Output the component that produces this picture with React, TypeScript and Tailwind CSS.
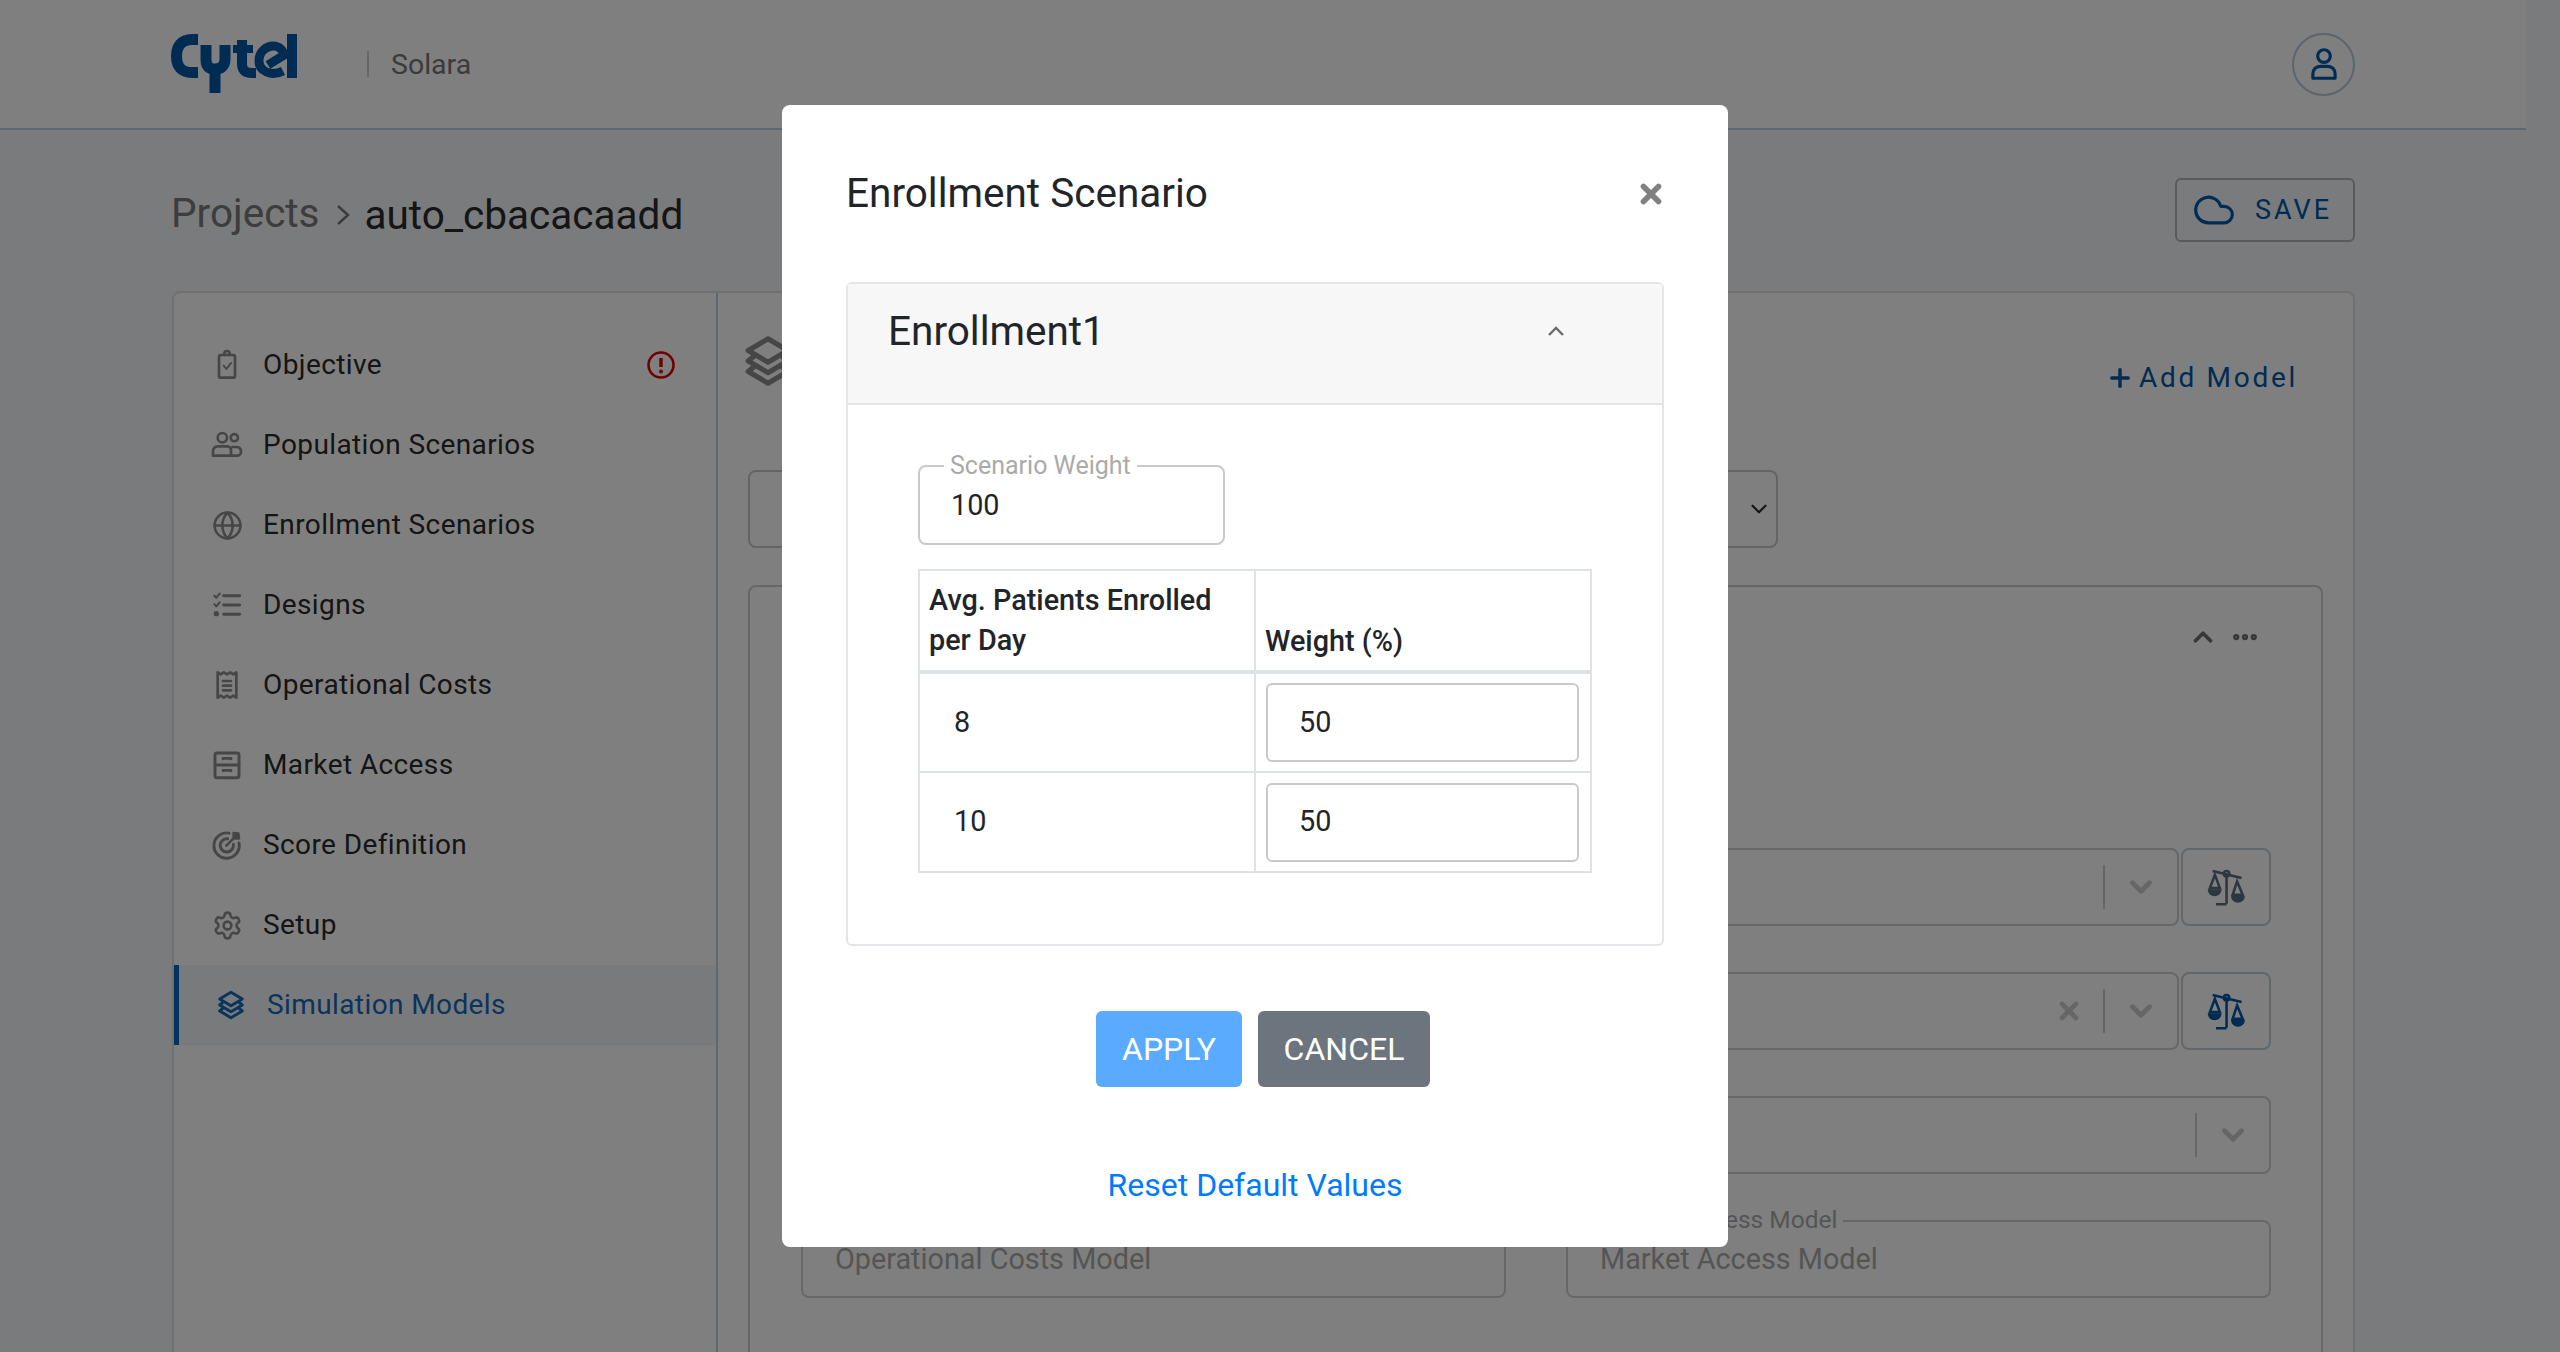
import React from "react";
import { ChevronDown, ChevronUp, Plus, X, MoreHorizontal, Globe, Settings, Cloud } from "lucide-react";

const Ic = ({ children, className = "", size = 32, vb = 24 }: { children: React.ReactNode; className?: string; size?: number; vb?: number }) => (
  <svg width={size} height={size} viewBox={`0 0 ${vb} ${vb}`} fill="none" stroke="currentColor" strokeWidth={2} strokeLinecap="round" strokeLinejoin="round" className={className}>
    {children}
  </svg>
);

const Logo = () => (
  <svg width="128" height="60" viewBox="0 0 128 60" fill="none" stroke="#0058a8" strokeWidth={10}>
    <path d="M27 5.500 H21 C10 5.500 5.500 13 5.500 22 C5.500 32 10 38.500 21 38.500 H27" strokeWidth={11} />
    <path d="M35 11 V25 C35 32 38 35 44 35 C50 35 54 32 54 25 V11" strokeWidth={11} />
    <path d="M44 32 V59" strokeWidth={11} />
    <path d="M71 6 V29 C71 36 74 39 81 39 H85" strokeWidth={10} />
    <path d="M62 15 H82" strokeWidth={8} />
    <path d="M112 37 C100 43 88 37 88 27 C88 17 96 12 102 12 C108 12 112 16 113 21 L97 31" strokeWidth={9} />
    <path d="M121 0 V44" />
  </svg>
);

const Scale = () => (
  <svg width="40" height="40" viewBox="0 0 36 36" fill="currentColor" stroke="currentColor" strokeWidth={2.300}>
    <circle cx="18.500" cy="6" r="2.400" fill="none" />
    <path d="M6 3.500 L32 10" fill="none" />
    <path d="M18.500 8.500 V33 M9 33.500 H18.500" fill="none" />
    <path d="M8 7 L3.500 19 H12.500 Z" fill="none" />
    <path d="M1.500 20 H14 A6.250 6.250 0 0 1 1.500 20 Z" stroke="none" />
    <path d="M28 13 L24 25 H33 Z" fill="none" />
    <path d="M22.500 26 H35 A6.250 6.250 0 0 1 22.500 26 Z" stroke="none" />
  </svg>
);

const nav: [string, React.ReactNode][] = [
  ["Objective", <Ic><rect x="6" y="4.500" width="12" height="17" rx="1.500" /><path d="M10 4.500 V3.500 A2 2 0 0 1 14 3.500 V4.500" /><path d="M9.500 12.500 L11.500 15 L15 10.500" strokeWidth={1.500} /></Ic>],
  ["Population Scenarios", <Ic><circle cx="8.500" cy="6.500" r="3.500" /><circle cx="17.500" cy="6.500" r="2.700" /><path d="M1.500 20 V16.500 A3.500 3.500 0 0 1 5 13 H12 A3.500 3.500 0 0 1 15 15 V20 Z" /><path d="M16 13.500 H19.500 A3.200 3.200 0 0 1 22.500 16.500 V17 A3 3 0 0 1 19.500 20 H16" /></Ic>],
  ["Enrollment Scenarios", <Globe size={31} strokeWidth={2} />],
  ["Designs", <Ic><path d="M2.500 5 L4 6.500 L6.500 3.500 M2.500 11.500 L4 13 L6.500 10" strokeWidth={1.600} /><path d="M9.500 5 H21.500 M9.500 12 H21.500 M9.500 19 H21.500" strokeWidth={2.200} /><circle cx="4" cy="18.500" r="1" /></Ic>],
  ["Operational Costs", <Ic><path d="M5 2.500 L7.300 4 L9.600 2.500 L12 4 L14.400 2.500 L16.700 4 L19 2.500 V21.500 L16.700 20 L14.400 21.500 L12 20 L9.600 21.500 L7.300 20 L5 21.500 Z" /><path d="M9 9 H15 M9 12.500 H15 M9 16 H15" /></Ic>],
  ["Market Access", <Ic><rect x="3" y="3" width="18" height="18.500" rx="1.500" strokeWidth={2.200} /><path d="M3 12 H21" strokeWidth={2.200} /><path d="M9 7.500 V7 H15 V7.500 M9 16.500 V16 H15 V16.500" /></Ic>],
  ["Score Definition", <Ic><path d="M13.500 3.100 A9.500 9.500 0 1 0 21 10.500" strokeWidth={2.200} /><path d="M12.500 7.300 A5 5 0 1 0 16.800 11.500" strokeWidth={2.200} /><path d="M11.500 12.500 L19 5" /><path d="M17 3 L20.500 3.500 L21 7 L18 7 L17 6 Z" fill="currentColor" /></Ic>],
  ["Setup", <Settings size={31} strokeWidth={2} />],
];

const Stack = ({ size = 32, className = "", sw = 2.2 }: { size?: number; className?: string; sw?: number }) => (
  <Ic size={size} className={className}>
    <path d="M12 2.500 L20.500 7.500 L12 12.500 L3.500 7.500 Z" strokeWidth={sw} />
    <path d="M6 10 L3.500 12 L12 17 L20.500 12 L18 10" strokeWidth={sw} />
    <path d="M6 14.500 L3.500 16.500 L12 21.500 L20.500 16.500 L18 14.500" strokeWidth={sw} />
  </Ic>
);

const SelectBox = ({ className = "", clear = false }: { className?: string; clear?: boolean }) => (
  <div className={`h-[78px] rounded-[8px] border-2 border-[#cfcfcf] flex items-center justify-end ${className}`}>
    {clear && <X size={28} strokeWidth={4} className="text-[#cccccc] mr-[20px]" />}
    <div className="w-[2px] h-[44px] bg-[#cccccc]" />
    <ChevronDown size={34} strokeWidth={3.400} className="text-[#cccccc] mx-[19px]" />
  </div>
);

const ScaleBtn = ({ className = "" }: { className?: string }) => (
  <div className={`w-[90px] h-[78px] rounded-[8px] border-2 border-[#c4ced8] flex items-center justify-center ${className}`}>
    <Scale />
  </div>
);

const Field = ({ label, text, className = "" }: { label?: string; text: string; className?: string }) => (
  <div className={`relative h-[78px] rounded-[8px] border-2 border-[#cfcfcf] flex items-center pl-[32px] pt-[2px] ${className}`}>
    {label && <span className="absolute left-[27px] -top-[17px] bg-white px-[6px] text-[24.500px] leading-[30px] text-[#aaaaaa]">{label}</span>}
    <span className="text-[28.800px] text-[#aaaaaa]">{text}</span>
  </div>
);

const ModalInput = ({ value }: { value: string }) => (
  <div className="h-[79px] rounded-[6px] border-2 border-[#c9c9c9] flex items-center pl-[31px] text-[28.800px] text-[#212529]">{value}</div>
);

export default function App() {
  return (
    <div className="relative h-[1352px] w-[2560px] overflow-hidden bg-[#f4f6f8] font-['Roboto',sans-serif]">
      <div className="w-[2526px]">
        <header className="h-[130px] bg-white border-b-2 border-[#bcd0e4] pl-[171px] pr-[171px] flex items-center">
          <div><Logo /></div>
          <div className="w-[2px] h-[26px] bg-[#cfcfcf] ml-[68px]" />
          <span className="ml-[22px] mt-[2px] text-[28.500px] text-[#777777]">Solara</span>
          <div className="ml-auto w-[63px] h-[63px] rounded-full border-2 border-[#b8c8d8] flex items-center justify-center text-[#0058a8]">
            <Ic size={38}><circle cx="12" cy="7" r="4" /><path d="M5 21 V18 A4.500 4.500 0 0 1 9.500 13.500 H14.500 A4.500 4.500 0 0 1 19 18 V21 Z" /></Ic>
          </div>
        </header>

        <div className="pl-[172px] pr-[171px]">
          <div className="h-[161px] flex items-start">
            <div className="flex items-center mt-[55px] h-[56px] -ml-[1px]">
              <span className="text-[40.500px] text-[#7a7a7a]">Projects</span>
              <svg width="14" height="24" viewBox="0 0 14 24" fill="none" stroke="#777777" strokeWidth={2.400} className="ml-[16px] mt-[4px]"><path d="M2 3 L12 12 L2 21" /></svg>
              <span className="ml-[15px] mt-[5px] text-[40.500px] text-[#2a2a2a]">auto_cbacacaadd</span>
            </div>
            <div className="ml-auto mt-[48px] w-[180px] h-[64px] rounded-[6px] border-2 border-[#b4b4b4] flex items-center pl-[15px] text-[#0058a8]">
              <Cloud size={44} strokeWidth={1.700} />
              <span className="ml-[19px] text-[27px] tracking-[3px]">SAVE</span>
            </div>
          </div>

          <div className="h-[1100px] bg-white rounded-t-[8px] border-2 border-[#e0e0e0] flex">
            <aside className="w-[544px] shrink-0 border-r-2 border-[#bcd0e4] pt-[32px]">
              {nav.map(([label, icon]) => (
                <div key={label} className="h-[80px] flex items-center pl-[37px] pr-[40px] text-[#2a2a2a]">
                  <span className="w-[32px] flex justify-center text-[#8c8c8c]">{icon}</span>
                  <span className="ml-[20px] text-[28px] tracking-[0.400px]">{label}</span>
                  {label === "Objective" && (
                    <svg width="30" height="30" viewBox="0 0 30 30" className="ml-auto text-[#e00000]" fill="none" stroke="currentColor" strokeWidth={2.600}>
                      <circle cx="15" cy="15" r="12.500" />
                      <path d="M15 8 V17" strokeWidth={3.400} />
                      <circle cx="15" cy="21.500" r="1.900" fill="currentColor" stroke="none" />
                    </svg>
                  )}
                </div>
              ))}
              <div className="h-[80px] flex items-center border-l-[5px] border-[#0a66c2] bg-[#f2f4f6] pl-[36px] text-[#1668b8]">
                <Stack size={32} />
                <span className="ml-[20px] text-[28px] tracking-[0.400px]">Simulation Models</span>
              </div>
            </aside>

            <main className="flex-1 pl-[30px] pr-[30px] pt-[43px]">
              <div className="h-[70px] flex items-start">
                <Stack size={56} sw={2.200} className="text-[#8c8c8c] -ml-[8px] -mt-[3px]" />
                <div className="ml-auto mr-[25px] mt-[21px] flex items-center text-[#0058a8]">
                  <Plus size={28} strokeWidth={3} />
                  <span className="ml-[5px] text-[28px] tracking-[2.700px]">Add Model</span>
                </div>
              </div>
              <div className="mt-[64px] w-[1030px] h-[78px] rounded-[8px] border-2 border-[#c8c8c8] flex items-center justify-end pr-[4px]">
                <ChevronDown size={26} strokeWidth={2} className="text-[#2a2a2a]" />
              </div>
              <div className="mt-[37px] h-[800px] rounded-[8px] border-2 border-[#cfcfcf] pt-[35px] pl-[51px] pr-[49px]">
                <div className="h-[226px] flex items-start justify-end pr-[12px] text-[#6e6e6e]">
                  <ChevronUp size={30} strokeWidth={3} />
                  <MoreHorizontal size={30} strokeWidth={3} className="ml-[12px]" />
                </div>
                <div className="grid grid-cols-[705px_705px] gap-x-[60px] gap-y-[46px]">
                  <div />
                  <div className="flex gap-[2px] text-[#5c6e80]"><SelectBox className="flex-1" /><ScaleBtn /></div>
                  <div />
                  <div className="flex gap-[2px] text-[#0058a8]"><SelectBox className="flex-1" clear /><ScaleBtn /></div>
                  <div />
                  <SelectBox />
                  <Field label="Operational Costs Model" text="Operational Costs Model" />
                  <Field label="Market Access Model" text="Market Access Model" />
                </div>
              </div>
            </main>
          </div>
        </div>
      </div>

      <div className="absolute inset-0 bg-black/50 flex justify-start items-start pt-[105px] pl-[782px]">
        <div className="w-[946px] h-[1142px] bg-white rounded-[8px] pt-[61px] px-[64px]">
          <div className="h-[54px] flex items-center justify-between">
            <span className="text-[40.500px] text-[#212529]">Enrollment Scenario</span>
            <X size={30} strokeWidth={4.500} className="text-[#808080] -mr-[2px] mt-[1px]" />
          </div>

          <div className="mt-[62px] rounded-[6px] border-2 border-[#e3e5e8]">
            <div className="h-[121px] bg-[#f7f7f7] border-b-2 border-[#e3e5e8] pl-[40px] pr-[97px] pt-[23px] flex items-start justify-between">
              <span className="text-[40.500px] leading-[48px] text-[#212529]">Enrollment1</span>
              <svg width="18" height="12" viewBox="0 0 18 12" fill="none" stroke="#6b6b6b" strokeWidth={2.400} className="mt-[18px]"><path d="M2 10 L9 3 L16 10" /></svg>
            </div>
            <div className="pl-[70px] pt-[60px] pb-[71px]">
              <div className="relative w-[307px] h-[80px] rounded-[8px] border-2 border-[#c9c9c9] flex items-center pl-[31px] pt-[2px] text-[28.800px] text-[#212529]">
                <span className="absolute left-[24px] -top-[15px] bg-white px-[6px] text-[25px] leading-[28px] text-[#aaaaaa]">Scenario Weight</span>
                100
              </div>
              <table className="mt-[24px] w-[674px] table-fixed border-collapse text-[28.800px] text-[#212529]">
                <thead>
                  <tr className="h-[102px]">
                    <th className="w-[336px] border-2 border-b-[4px] border-[#dee2e6] px-[9px] align-bottom pb-[10px] text-left font-medium leading-[40px]">Avg. Patients Enrolled per Day</th>
                    <th className="border-2 border-b-[4px] border-[#dee2e6] px-[9px] align-bottom pb-[9px] text-left font-medium leading-[40px]">Weight (%)</th>
                  </tr>
                </thead>
                <tbody>
                  <tr className="h-[100px]">
                    <td className="border-2 border-[#dee2e6] pl-[34px]">8</td>
                    <td className="border-2 border-[#dee2e6] pl-[10px] pr-[11px]"><ModalInput value="50" /></td>
                  </tr>
                  <tr className="h-[100px]">
                    <td className="border-2 border-[#dee2e6] pl-[34px]">10</td>
                    <td className="border-2 border-[#dee2e6] pl-[10px] pr-[11px]"><ModalInput value="50" /></td>
                  </tr>
                </tbody>
              </table>
            </div>
          </div>

          <div className="mt-[65px] flex justify-center gap-[16px] ml-[16px]">
            <button className="w-[146px] h-[76px] rounded-[6px] bg-[#5aabff] text-white text-[32px]">APPLY</button>
            <button className="w-[172px] h-[76px] rounded-[6px] bg-[#6c757d] text-white text-[32px]">CANCEL</button>
          </div>
          <div className="mt-[78px] text-center text-[32px] leading-[40px] text-[#007bff]">Reset Default Values</div>
        </div>
      </div>
    </div>
  );
}
